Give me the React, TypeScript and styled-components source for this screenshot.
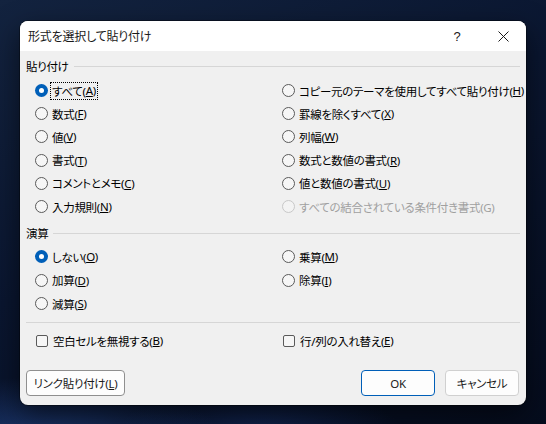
import React from 'react';
import styled, { createGlobalStyle } from 'styled-components';

const GlobalStyle = createGlobalStyle`
  html, body {
    margin: 0;
    padding: 0;
  }
  body {
    width: 546px;
    height: 424px;
    overflow: hidden;
    font-family: "Noto Sans", "Noto Sans CJK JP", sans-serif;
    font-feature-settings: "palt";
  }
`;

const Desktop = styled.div`
  width: 546px;
  height: 424px;
  box-sizing: border-box;
  padding: 21px 0 0 20px;
  background:
    radial-gradient(ellipse 260px 90px at 40px 440px, rgba(44, 86, 170, 0.55), transparent 70%),
    radial-gradient(ellipse 200px 60px at 260px 430px, rgba(30, 60, 130, 0.45), transparent 70%),
    linear-gradient(155deg, #13233f 0%, #0a1630 45%, #050c1d 100%);
`;

const Dialog = styled.div`
  width: 506px;
  height: 384px;
  box-sizing: border-box;
  border-radius: 8px;
  background: #f0f0f0;
  overflow: hidden;
  display: flex;
  flex-direction: column;
  box-shadow: 0 0 0 1px rgba(0, 0, 0, 0.35), 0 10px 28px rgba(0, 0, 0, 0.55);
  color: #000;
  font-size: 11.5px;
  letter-spacing: -0.3px;
`;

const TitleBar = styled.div`
  height: 30px;
  flex-shrink: 0;
  background: #fff;
  display: flex;
  align-items: center;
`;

const Title = styled.div`
  flex: 1;
  padding-left: 8px;
  font-size: 12px;
  letter-spacing: -0.2px;
  color: #1a1a1a;
`;

const CaptionButton = styled.div`
  width: 46px;
  height: 30px;
  display: flex;
  align-items: center;
  justify-content: center;
  font-family: "Liberation Sans", sans-serif;
  font-size: 13px;
  color: #1a1a1a;
`;

const Body = styled.div`
  flex: 1;
  display: flex;
  flex-direction: column;
  padding: 7px 6px 9px 6px;
`;

const GroupHeader = styled.div<{ $top?: number }>`
  height: 16px;
  margin-top: ${p => p.$top ?? 0}px;
  display: flex;
  align-items: center;
  gap: 5px;
  &::after {
    content: '';
    flex: 1;
    height: 1px;
    background: #d6d6d6;
  }
`;

const OptionGrid = styled.div<{ $rows: number; $row: number; $top: number }>`
  margin-top: ${p => p.$top}px;
  padding-left: 9px;
  display: grid;
  grid-template-columns: 247px 1fr;
  grid-template-rows: repeat(${p => p.$rows}, ${p => p.$row}px);
  grid-auto-flow: column;
`;

const Option = styled.div<{ $disabled?: boolean }>`
  display: flex;
  align-items: center;
  color: ${p => (p.$disabled ? '#a0a0a0' : '#000')};
  white-space: nowrap;
`;

const RadioMark = styled.span<{ $checked?: boolean; $disabled?: boolean }>`
  width: 13px;
  height: 13px;
  box-sizing: border-box;
  border-radius: 50%;
  flex-shrink: 0;
  margin-right: 2px;
  position: relative;
  border: ${p =>
    p.$checked ? 'none' : `1px solid ${p.$disabled ? '#c8c8c8' : '#5a5a5a'}`};
  background: ${p => (p.$checked ? '#005fb8' : p.$disabled ? '#f3f3f3' : '#f6f6f6')};
  &::after {
    content: '';
    display: ${p => (p.$checked ? 'block' : 'none')};
    position: absolute;
    left: 4px;
    top: 4px;
    width: 5px;
    height: 5px;
    border-radius: 50%;
    background: #fff;
  }
`;

const CheckMark = styled.span`
  width: 12px;
  height: 12px;
  box-sizing: border-box;
  border: 1px solid #5a5a5a;
  border-radius: 2px;
  background: #f6f6f6;
  flex-shrink: 0;
  margin-left: 1px;
  margin-right: 3px;
`;

const OptionText = styled.span<{ $focused?: boolean }>`
  height: 18px;
  box-sizing: border-box;
  display: flex;
  align-items: center;
  padding: 0 1px;
  border: 1px dotted ${p => (p.$focused ? '#000' : 'transparent')};
`;

const Separator = styled.div`
  height: 1px;
  margin-top: 7px;
  background: #d6d6d6;
`;

const ButtonRow = styled.div`
  margin-top: 18px;
  padding-right: 1px;
  display: flex;
  gap: 10px;
`;

const Button = styled.button<{ $primary?: boolean; $width: number }>`
  height: 26px;
  width: ${p => p.$width}px;
  box-sizing: border-box;
  border-radius: 4px;
  font-family: inherit;
  font-feature-settings: "palt";
  font-size: 11.5px;
  letter-spacing: -0.3px;
  color: #1a1a1a;
  padding: 0;
  background: #fdfdfd;
  border: 1px solid ${p => (p.$primary ? '#005fb8' : '#d0d0d0')};
  &:first-child {
    border-color: #8f8f8f;
    margin-right: auto;
  }
`;

const Mnemonic: React.FC<{ text: string }> = ({ text }) => {
  const i = text.indexOf('&');
  if (i < 0) return <>{text}</>;
  return (
    <>
      {text.slice(0, i)}
      <u>{text[i + 1]}</u>
      {text.slice(i + 2)}
    </>
  );
};

type Item = { label: string; checked?: boolean; disabled?: boolean; focused?: boolean };

const pasteItems: Item[] = [
  { label: 'すべて(&A)', checked: true, focused: true },
  { label: '数式(&F)' },
  { label: '値(&V)' },
  { label: '書式(&T)' },
  { label: 'コメントとメモ(&C)' },
  { label: '入力規則(&N)' },
  { label: 'コピー元のテーマを使用してすべて貼り付け(&H)' },
  { label: '罫線を除くすべて(&X)' },
  { label: '列幅(&W)' },
  { label: '数式と数値の書式(&R)' },
  { label: '値と数値の書式(&U)' },
  { label: 'すべての結合されている条件付き書式(G)', disabled: true },
];

const opItems: Item[] = [
  { label: 'しない(&O)', checked: true },
  { label: '加算(&D)' },
  { label: '減算(&S)' },
  { label: '乗算(&M)' },
  { label: '除算(&I)' },
];

const Radio: React.FC<{ item: Item }> = ({ item }) => (
  <Option $disabled={item.disabled}>
    <RadioMark $checked={item.checked} $disabled={item.disabled} />
    <OptionText $focused={item.focused}>
      <Mnemonic text={item.label} />
    </OptionText>
  </Option>
);

const Check: React.FC<{ label: string }> = ({ label }) => (
  <Option>
    <CheckMark />
    <OptionText>
      <Mnemonic text={label} />
    </OptionText>
  </Option>
);

const CloseIcon = () => (
  <svg width="11" height="11" viewBox="0 0 11 11">
    <path d="M0.5 0.5 L10.5 10.5 M10.5 0.5 L0.5 10.5" stroke="#1a1a1a" strokeWidth="1" fill="none" />
  </svg>
);

const App: React.FC = () => (
  <>
    <GlobalStyle />
    <Desktop>
      <Dialog>
        <TitleBar>
          <Title>形式を選択して貼り付け</Title>
          <CaptionButton>?</CaptionButton>
          <CaptionButton>
            <CloseIcon />
          </CaptionButton>
        </TitleBar>
        <Body>
          <GroupHeader>貼り付け</GroupHeader>
          <OptionGrid $rows={6} $row={23.2} $top={5}>
            {pasteItems.map(item => (
              <Radio key={item.label} item={item} />
            ))}
          </OptionGrid>
          <GroupHeader $top={7}>演算</GroupHeader>
          <OptionGrid $rows={3} $row={23.4} $top={4}>
            {opItems.map(item => (
              <Radio key={item.label} item={item} />
            ))}
          </OptionGrid>
          <Separator />
          <OptionGrid $rows={1} $row={23.2} $top={6}>
            <Check label="空白セルを無視する(&B)" />
            <Check label="行/列の入れ替え(&E)" />
          </OptionGrid>
          <ButtonRow>
            <Button $width={99}>
              <Mnemonic text="リンク貼り付け(&L)" />
            </Button>
            <Button $width={74} $primary>
              OK
            </Button>
            <Button $width={74}>キャンセル</Button>
          </ButtonRow>
        </Body>
      </Dialog>
    </Desktop>
  </>
);

export default App;
